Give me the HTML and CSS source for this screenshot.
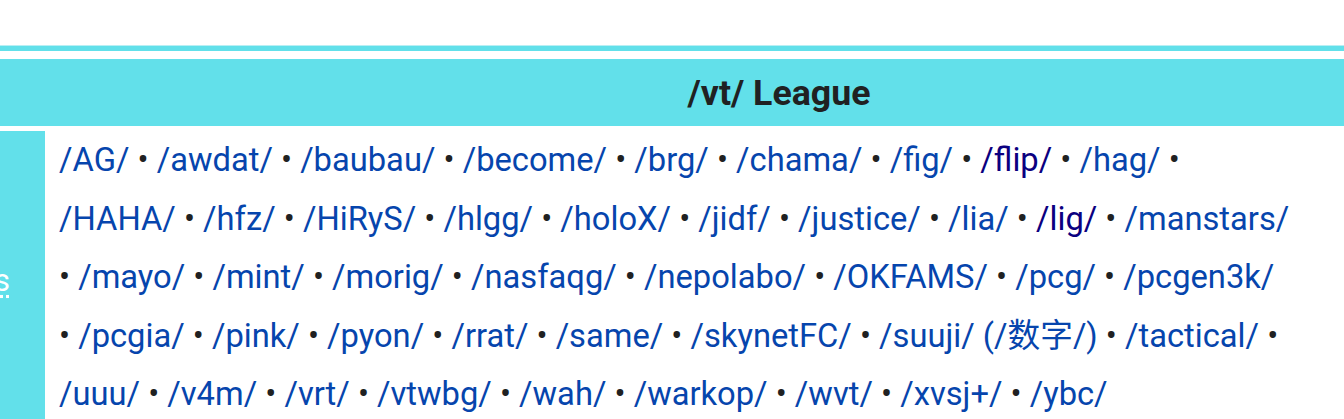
FILE: index.html
```html
<!DOCTYPE html>
<html lang="en">
<head>
<meta charset="utf-8">
<title>/vt/ League</title>
<link rel="stylesheet" href="styles.css">
</head>
<body>
<div class="page">
  <div class="navbox">
    <div class="topbar"></div>
    <div class="title"><span class="title-text">/vt/ League</span></div>
    <div class="row">
      <div class="group"><abbr class="group-label" title="Other boards">Other boards</abbr></div>
      <div class="list">
        <a href="#">/AG/</a> • <a href="#">/awdat/</a> • <a href="#">/baubau/</a> • <a href="#">/become/</a> • <a href="#">/brg/</a> • <a href="#">/chama/</a> • <a href="#">/fig/</a> • <a class="visited" href="#">/flip/</a> • <a href="#">/hag/</a> • <a href="#">/HAHA/</a> • <a href="#">/hfz/</a> • <a href="#">/HiRyS/</a> • <a href="#">/hlgg/</a> • <a href="#">/holoX/</a> • <a href="#">/jidf/</a> • <a href="#">/justice/</a> • <a href="#">/lia/</a> • <a class="visited" href="#">/lig/</a> • <a href="#">/manstars/</a> • <a href="#">/mayo/</a> • <a href="#">/mint/</a> • <a href="#">/morig/</a> • <a href="#">/nasfaqg/</a> • <a href="#">/nepolabo/</a> • <a href="#">/OKFAMS/</a> • <a href="#">/pcg/</a> • <a href="#">/pcgen3k/</a> • <a href="#">/pcgia/</a> • <a href="#">/pink/</a> • <a href="#">/pyon/</a> • <a href="#">/rrat/</a> • <a href="#">/same/</a> • <a href="#">/skynetFC/</a> • <a href="#">/suuji/</a> <a href="#">(/数字/)</a> • <a href="#">/tactical/</a> • <a href="#">/uuu/</a> • <a href="#">/v4m/</a> • <a href="#">/vrt/</a> • <a href="#">/vtwbg/</a> • <a href="#">/wah/</a> • <a href="#">/warkop/</a> • <a href="#">/wvt/</a> • <a href="#">/xvsj+/</a> • <a href="#">/ybc/</a>
      </div>
      <div class="aside"></div>
    </div>
  </div>
</div>
</body>
</html>
```
FILE: styles.css
```css
html, body {
  margin: 0;
  padding: 0;
  background: #ffffff;
  overflow: hidden;
}

body {
  width: 1344px;
  height: 419px;
  font-family: Roboto, "Noto Sans CJK SC", sans-serif;
  color: #202122;
}

.page {
  padding-top: 45px;
}

.navbox {
  margin-left: -200px;
  width: 1958px;
  display: flex;
  flex-direction: column;
}

.topbar {
  height: 5px;
  background: #62e0ea;
  border-top: 1px solid #b8eff4;
}

.title {
  margin-top: 8px;
  height: 67px;
  background: #62e0ea;
  display: flex;
  align-items: center;
  justify-content: center;
}

.title-text {
  font-weight: 700;
  font-size: 35.7px;
  color: #202122;
}

.row {
  margin-top: 5px;
  display: flex;
  align-items: stretch;
}

.group {
  width: 245px;
  flex: none;
  background: #62e0ea;
  display: flex;
  align-items: center;
  justify-content: flex-end;
  padding-right: 35px;
  box-sizing: border-box;
}

.group-label {
  color: #ffffff;
  font-size: 31px;
  white-space: nowrap;
  text-decoration: underline dotted;
  text-underline-offset: 4px;
}

.list {
  width: 1262px;
  flex: none;
  box-sizing: border-box;
  padding: 0 14px 6px;
  line-height: 58.6px;
  font-size: 32.7px;
  color: #202122;
}

.list a {
  color: #0645ad;
  text-decoration: none;
}

.list a.visited {
  color: #0b0080;
}

.aside {
  flex: 1;
  background: #ffffff;
}
```
